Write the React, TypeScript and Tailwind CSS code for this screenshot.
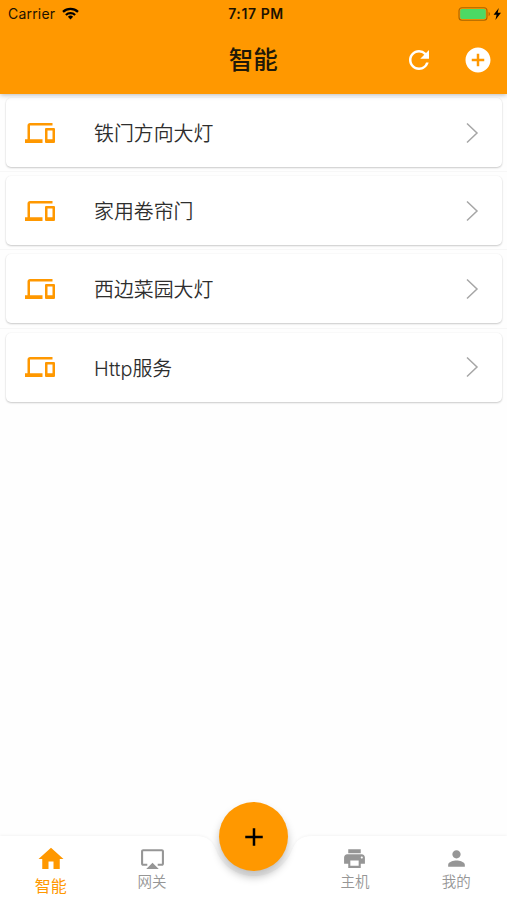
import {
  MdAdd,
  MdAddCircle,
  MdAirplay,
  MdDevices,
  MdHome,
  MdLocalPrintshop,
  MdPerson,
  MdRefresh,
} from 'react-icons/md';

const devices = ['铁门方向大灯', '家用卷帘门', '西边菜园大灯', 'Http服务'];

function StatusBar() {
  return (
    <div className="grid h-[27px] grid-cols-3 items-center pl-[8px] pr-[5px] text-[#1c1200]">
      <div className="flex items-center gap-[7px]">
        <span className="text-[14px] tracking-[0.2px]">Carrier</span>
        <svg width="17" height="13" viewBox="0 0 17 13" fill="none" stroke="#000" strokeWidth="2.3" className="-mt-[1px]">
          <path d="M1 4.9C5.2.9 11.8.9 16 4.9" />
          <path d="M3.9 8C6.5 5.6 10.5 5.6 13.1 8" />
          <path d="M8.5 12.4 5.9 9.8a3.7 3.7 0 0 1 5.2 0z" fill="#000" stroke="none" />
        </svg>
      </div>
      <span className="ml-[2px] text-center text-[14px] font-semibold tracking-[0.6px]">7:17 PM</span>
      <div className="flex items-center justify-end">
        <svg width="44" height="14" viewBox="0 0 44 14">
          <rect x="1" y="0.8" width="28" height="12.4" rx="3" fill="none" stroke="#a86400" strokeWidth="1.1" />
          <rect x="2.2" y="2" width="25.6" height="10" rx="1.8" fill="#4cd964" />
          <path d="M30.6 4.8c1.8.8 1.8 3.6 0 4.4z" fill="#a86400" />
          <path d="M40.8 1 35.6 7.8h3L37.4 13l5.6-7.2h-3.3z" fill="#000" />
        </svg>
      </div>
    </div>
  );
}

function Header() {
  return (
    <header className="relative z-10 h-[94px] bg-[#ff9800] shadow-[0_1px_5px_rgba(0,0,0,0.28)]">
      <StatusBar />
      <div className="grid h-[65px] grid-cols-[1fr_auto_1fr] items-center pr-[14.5px]">
        <h1 className="col-start-2 ml-[14px] mt-[1px] text-[24.5px] font-medium leading-none text-[#201808]">智能</h1>
        <div className="flex justify-end gap-[28.5px] text-white">
          <MdRefresh size={30} />
          <MdAddCircle size={30} />
        </div>
      </div>
    </header>
  );
}

function DeviceRow({ name }: { name: string }) {
  return (
    <li className="h-[78.2px] border-b border-[#f7f7f7] px-[5.5px] pb-[4px] pt-[4px] last:border-transparent">
      <div className="flex h-[69px] items-center rounded-[5px] bg-white pl-[19.5px] pr-[22.5px] shadow-[0_1px_2px_rgba(0,0,0,0.2),0_0_2px_rgba(0,0,0,0.05)]">
        <MdDevices size={30} className="text-[#ff9800]" />
        <span className="ml-[39px] mt-[5px] flex-1 text-[19.9px] font-[350] leading-none text-[#2e2e2e]">{name}</span>
        <svg width="14" height="22" viewBox="0 0 14 22" fill="none" stroke="#a6a6a6" strokeWidth="1.5">
          <path d="m2 1.5 10 9.5L2 20.5" />
        </svg>
      </div>
    </li>
  );
}

function BottomBar() {
  return (
    <nav className="relative h-[65px]">
      {/* Notched bar surface */}
      <svg className="absolute bottom-0 left-0 drop-shadow-[0_-1px_1px_rgba(0,0,0,0.04)]" width="507" height="65" viewBox="0 0 507 65">
        <path
          d="M0 1H195C208 1 212 6 216 15C222 31 237 41 254 41S286 31 292 15C296 6 300 1 313 1H507V65H0Z"
          fill="#fff"
        />
      </svg>
      <div className="relative grid h-full grid-cols-5 text-[#969696]">
        <div className="flex flex-col items-center pt-[9px] text-[#ff9800]">
          <MdHome size={30} />
          <span className="mt-[4px] text-[16px] leading-none">智能</span>
        </div>
        <div className="flex flex-col items-center pt-[11px]">
          <MdAirplay size={25} />
          <span className="mt-[4px] text-[14.5px] font-[350] leading-none">网关</span>
        </div>
        <div className="flex justify-center">
          <button className="-mt-[33px] ml-px flex size-[69px] shrink-0 items-center justify-center rounded-full bg-[#ff9800] text-black shadow-[0_6px_9px_rgba(0,0,0,0.25)]">
            <MdAdd size={30} />
          </button>
        </div>
        <div className="flex flex-col items-center pt-[11px]">
          <MdLocalPrintshop size={25} />
          <span className="mt-[4px] text-[14.5px] font-[350] leading-none">主机</span>
        </div>
        <div className="flex flex-col items-center pt-[11px]">
          <MdPerson size={25} />
          <span className="mt-[4px] text-[14.5px] font-[350] leading-none">我的</span>
        </div>
      </div>
    </nav>
  );
}

export default function App() {
  return (
    <div className="flex h-[900px] w-[507px] flex-col overflow-hidden bg-[#fefefe] font-['Inter','Noto_Sans_CJK_SC',sans-serif]">
      <Header />
      <main className="flex-1">
        <ul>
          {devices.map((name) => (
            <DeviceRow key={name} name={name} />
          ))}
        </ul>
      </main>
      <BottomBar />
    </div>
  );
}
